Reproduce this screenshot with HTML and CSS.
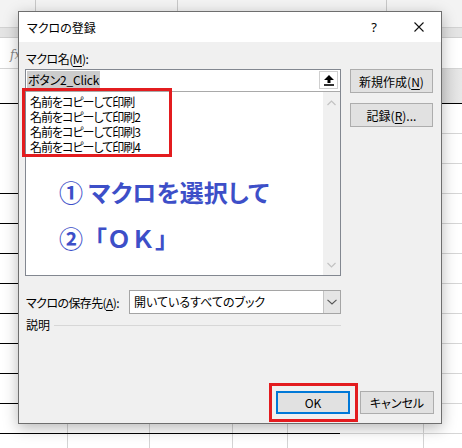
FILE: index.html
```html
<!DOCTYPE html>
<html lang="ja">
<head>
<meta charset="utf-8">
<title>マクロの登録</title>
<link rel="stylesheet" href="styles.css">
</head>
<body>
<div class="sheet">
  <div class="ribbon">
    <div class="rb c1"></div><div class="rb c2"></div><div class="rb c3"></div><div class="rb c4"></div>
  </div>
  <div class="band"></div>
  <div class="formula"><span class="fx">fx</span></div>
  <div class="colhead"></div>
  <div class="grid">
    <div class="grid-left"><div class="grid-left-lines"></div></div>
    <div class="grid-main"></div>
  </div>
</div>

<div class="dialog">
  <div class="titlebar">
    <span class="title">マクロの登録</span>
    <span class="help">?</span>
    <span class="close">
      <svg width="10" height="10" viewBox="0 0 10 10"><path d="M0.5 0.5 L9.5 9.5 M9.5 0.5 L0.5 9.5" stroke="#111" stroke-width="1.1" fill="none"/></svg>
    </span>
  </div>
  <div class="dlg-body">
    <div class="label">マクロ名(<u>M</u>):</div>
    <div class="main">
      <div class="combo">
        <div class="name-row">
          <span class="sel">ボタン2_Click</span>
          <span class="up-btn">
            <svg width="10" height="11" viewBox="0 0 10 11"><path d="M5 0 L10 5 H6.5 V8 H3.5 V5 H0 Z" fill="#000"/><rect x="0" y="9.2" width="10" height="1.6" fill="#000"/></svg>
          </span>
        </div>
        <div class="list">
          <div class="items">
            <div class="item">名前をコピーして印刷</div>
            <div class="item">名前をコピーして印刷2</div>
            <div class="item">名前をコピーして印刷3</div>
            <div class="item">名前をコピーして印刷4</div>
            <div class="note">① マクロを選択して</div>
            <div class="note note-ok">②「ＯＫ」</div>
          </div>
          <div class="scroll">
            <svg width="9" height="6" viewBox="0 0 9 6"><path d="M0.5 5 L4.5 1 L8.5 5" stroke="#c2c2c2" stroke-width="1.2" fill="none"/></svg>
            <svg width="9" height="6" viewBox="0 0 9 6"><path d="M0.5 1 L4.5 5 L8.5 1" stroke="#c2c2c2" stroke-width="1.2" fill="none"/></svg>
          </div>
        </div>
      </div>
      <div class="side">
        <div class="btn">新規作成(<u>N</u>)</div>
        <div class="btn">記録(<u>R</u>)...</div>
      </div>
    </div>
    <div class="save-row">
      <span class="save-label">マクロの保存先(<u>A</u>):</span>
      <div class="select">
        <span class="select-text">開いているすべてのブック</span>
        <span class="select-btn">
          <svg width="10" height="6" viewBox="0 0 10 6"><path d="M0.5 0.8 L5 5 L9.5 0.8" stroke="#555" stroke-width="1.1" fill="none"/></svg>
        </span>
      </div>
    </div>
    <div class="desc-row">
      <span>説明</span>
      <span class="desc-line"></span>
    </div>
    <div class="actions">
      <div class="btn btn-ok">OK</div>
      <div class="btn btn-cancel">キャンセル</div>
    </div>
  </div>
  <div class="mark mark-list"></div>
  <div class="mark mark-ok"></div>
</div>
</body>
</html>
```

FILE: styles.css
```css
* { box-sizing: border-box; }

html, body {
  margin: 0;
  padding: 0;
}

body {
  width: 462px;
  height: 448px;
  overflow: hidden;
  position: relative;
  background: #ffffff;
  font-family: "Noto Sans CJK JP", "Noto Sans", sans-serif;
  font-size: 12px;
  color: #000;
  font-feature-settings: "palt";
}

/* ---------- background spreadsheet ---------- */
.sheet {
  width: 462px;
  height: 448px;
  display: flex;
  flex-direction: column;
}

.ribbon {
  height: 28px;
  display: flex;
  background: #f3f3f3;
  border-bottom: 1px solid #d2d2d2;
}

.rb {
  height: 100%;
  border-right: 1px solid #c8c8c8;
}
.c1 { width: 36px; }
.c2 { width: 142px; }
.c3 { width: 209px; }
.c4 { flex: 1; border-right: none; }

.band {
  height: 10px;
  background: #e4e4e4;
  border-bottom: 1px solid #d0d0d0;
}

.formula {
  height: 31px;
  background: #fff;
  border-bottom: 1px solid #d4d4d4;
  padding: 7px 0 0 10px;
}

.fx {
  font-family: "DejaVu Serif", serif;
  font-style: italic;
  font-size: 12px;
  color: #888;
}

.colhead {
  height: 35px;
  background: linear-gradient(to right, #ffffff 0 18px, #d9d9d9 18px 440px, #e8e8e8 462px);
  border-bottom: 1px solid #000;
}

.grid {
  flex: 1;
  display: flex;
}

.grid-left {
  width: 18px;
  padding-top: 89px;
}

.grid-left-lines {
  height: 100%;
  background: repeating-linear-gradient(to bottom, #000 0 1px, transparent 1px 30px);
}

.grid-main {
  flex: 1;
  background:
    linear-gradient(#000, #000) 0 329px / 322px 1px no-repeat,
    linear-gradient(#d4d4d4, #d4d4d4) 49px 0 / 1px 100% no-repeat,
    linear-gradient(#d4d4d4, #d4d4d4) 131px 0 / 1px 100% no-repeat,
    linear-gradient(#d4d4d4, #d4d4d4) 214px 0 / 1px 100% no-repeat,
    linear-gradient(#d4d4d4, #d4d4d4) 269px 0 / 1px 100% no-repeat,
    linear-gradient(#d4d4d4, #d4d4d4) 405px 0 / 1px 100% no-repeat,
    repeating-linear-gradient(to bottom, transparent 0 29px, #d6d6d6 29px 30px);
}

/* ---------- dialog ---------- */
.dialog {
  position: absolute;
  left: 18px;
  top: 11px;
  width: 424px;
  height: 413px;
  border: 1px solid #6e6e6e;
  background: #f0f0f0;
  box-shadow: 0 4px 14px rgba(0, 0, 0, 0.28);
  display: flex;
  flex-direction: column;
}

.titlebar {
  height: 30px;
  flex: none;
  background: #ffffff;
  display: flex;
  align-items: center;
}

.title {
  padding-left: 8px;
  font-size: 12px;
  flex: 1;
}

.help {
  width: 44px;
  text-align: center;
  font-family: "Noto Sans", sans-serif;
  font-size: 13px;
}

.close {
  width: 45px;
  height: 30px;
  display: flex;
  align-items: center;
  justify-content: center;
}

.dlg-body {
  flex: 1;
  display: flex;
  flex-direction: column;
  padding: 9px 7px 9px 6px;
}

.label {
  line-height: 16px;
  height: 16px;
  padding-left: 1px;
  margin-bottom: 2px;
  letter-spacing: -0.5px;
}

u {
  text-decoration: underline;
  text-underline-offset: 2px;
}

.main {
  display: flex;
  align-items: flex-start;
  gap: 9px;
}

.combo {
  width: 316px;
  height: 207px;
  border: 1px solid #828790;
  background: #fff;
  display: flex;
  flex-direction: column;
}

.name-row {
  height: 22px;
  flex: none;
  display: flex;
  align-items: flex-start;
  justify-content: space-between;
  padding: 1px 2px 0 1px;
  border-bottom: 1px solid #a9a9a9;
}

.sel {
  background: #cccccc;
  height: 17px;
  line-height: 17px;
  padding: 0 1px;
  font-size: 12px;
  letter-spacing: -0.2px;
}

.up-btn {
  width: 19px;
  height: 18px;
  background: #fff;
  border: 1px solid #cfcfcf;
  display: flex;
  align-items: center;
  justify-content: center;
}

.list {
  flex: 1;
  display: flex;
}

.items {
  flex: 1;
  padding: 2px 0 0 4px;
}

.item {
  line-height: 15px;
  height: 15px;
  white-space: nowrap;
  letter-spacing: -1px;
}

.note {
  font-size: 24px;
  font-weight: bold;
  color: #3d4fc8;
  line-height: 46px;
  height: 46px;
  padding-left: 29px;
  white-space: nowrap;
}

.note-ok {
  font-feature-settings: normal;
}

.item + .note {
  margin-top: 15px;
}

.scroll {
  width: 17px;
  background: #f0f0f0;
  display: flex;
  flex-direction: column;
  align-items: center;
  justify-content: space-between;
  padding: 8px 0 7px;
}

.side {
  display: flex;
  flex-direction: column;
  gap: 10px;
}

.btn {
  background: #e1e1e1;
  border: 1px solid #adadad;
  display: flex;
  align-items: center;
  justify-content: center;
  font-size: 12px;
}

.side .btn {
  width: 83px;
  height: 24px;
}

.save-row {
  margin-top: 14px;
  width: 316px;
  display: flex;
  align-items: center;
  justify-content: space-between;
  padding-left: 1px;
}

.save-label {
  letter-spacing: -0.6px;
}

.select {
  width: 212px;
  height: 24px;
  background: #fff;
  border: 1px solid #a5a5a5;
  display: flex;
  align-items: stretch;
}

.select-text {
  flex: 1;
  padding-left: 4px;
  line-height: 22px;
}

.select-btn {
  width: 17px;
  background: #e5e5e5;
  border-left: 1px solid #c4c4c4;
  display: flex;
  align-items: center;
  justify-content: center;
}

.desc-row {
  margin-top: 3px;
  width: 316px;
  height: 16px;
  line-height: 16px;
  display: flex;
  align-items: center;
  gap: 4px;
  padding-left: 1px;
}

.desc-line {
  flex: 1;
  height: 1px;
  background: #d7d7d7;
}

.actions {
  margin-top: auto;
  display: flex;
  justify-content: flex-end;
  gap: 10px;
}

.actions .btn {
  width: 74px;
  height: 23px;
}

.btn-ok {
  border: 2px solid #0078d7;
}

/* red annotation frames */
.mark {
  position: absolute;
  border: 3px solid #e31c1f;
}

.mark-list {
  left: 3px;
  top: 76px;
  width: 150px;
  height: 69px;
}

.mark-ok {
  left: 250px;
  top: 371px;
  width: 89px;
  height: 39px;
}
```
